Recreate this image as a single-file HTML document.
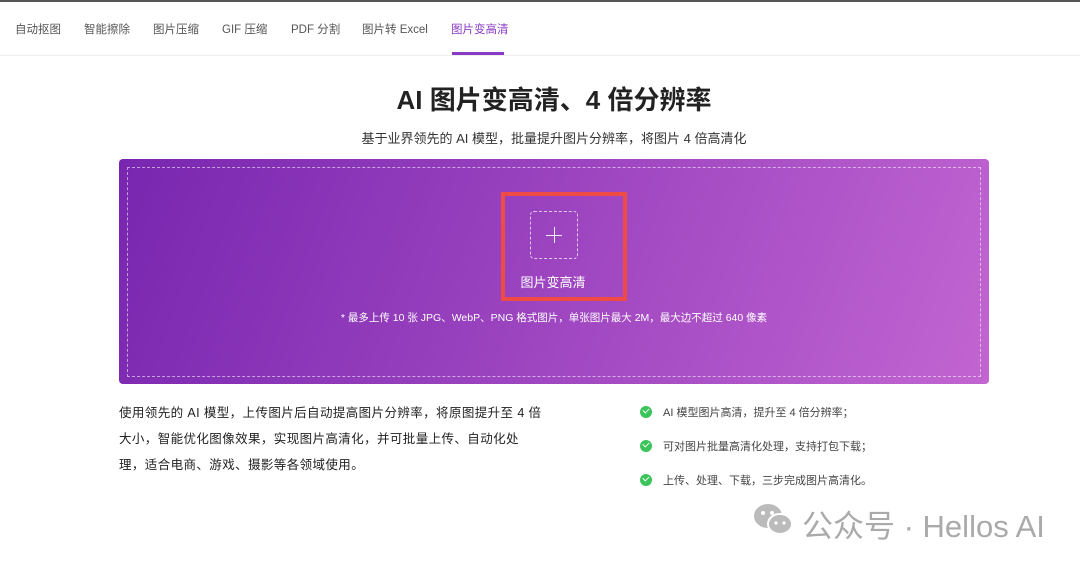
<!DOCTYPE html><html><head><meta charset="utf-8"><style>
body{margin:0;width:1080px;height:563px;background:#fff;font-family:"Liberation Sans","Noto Sans CJK SC",sans-serif;position:relative;overflow:hidden}
.top{position:absolute;left:0;top:0;width:1080px;height:2px;background:#555}
.nav{position:absolute;left:0;top:2px;width:1080px;height:53px;border-bottom:1px solid #eee}
.nav span{position:absolute;top:19px;font-size:11.5px;color:#555}
.nav .a{color:#8a3ac6}
.ul{position:absolute;left:452px;top:52px;width:52px;height:3px;background:#8a3ac6}
.abs{position:absolute}
.box{left:119px;top:159px;width:870px;height:225px;border-radius:4px;background:linear-gradient(110deg,#7826b0 0%,#9d45c0 50%,#c265d2 100%)}
.dash{left:127px;top:167px;width:852px;height:208px;border:1px dashed rgba(255,255,255,.55)}
.red{left:501px;top:192px;width:118px;height:101px;border:4px solid #f04a45}
.sq{left:530px;top:211px;width:46px;height:46px;border:1px dashed rgba(255,255,255,.7);border-radius:4px}
.li{left:640px;font-size:11px;color:#444}
.li i{display:inline-block;width:12px;height:12px;border-radius:50%;background:#3bc45a;vertical-align:-2px;margin-right:11px;position:relative}
.li i:after{content:"";position:absolute;left:3px;top:2px;width:5px;height:3px;border-left:1.5px solid #fff;border-bottom:1.5px solid #fff;transform:rotate(-45deg)}
</style></head><body>
<div class="top"></div>
<div class="nav">
<span style="left:15px">自动抠图</span><span style="left:84px">智能擦除</span><span style="left:153px">图片压缩</span><span style="left:222px">GIF 压缩</span><span style="left:291px">PDF 分割</span><span style="left:362px">图片转 Excel</span><span class="a" style="left:451px">图片变高清</span>
</div>
<div class="ul"></div>
<div class="abs" style="left:0;width:1108px;top:80px;text-align:center;font-size:26px;font-weight:bold;color:#222">AI 图片变高清、4 倍分辨率</div>
<div class="abs" style="left:0;width:1108px;top:128px;text-align:center;font-size:13px;color:#333">基于业界领先的 AI 模型，批量提升图片分辨率，将图片 4 倍高清化</div>
<div class="abs box"></div>
<div class="abs dash"></div>
<div class="abs red"></div>
<div class="abs sq"><div class="abs" style="left:15px;top:23px;width:16px;height:1px;background:#eee"></div><div class="abs" style="left:23px;top:15px;width:1px;height:16px;background:#eee"></div></div>
<div class="abs" style="left:490px;width:126px;top:272px;text-align:center;font-size:13px;color:#fff">图片变高清</div>
<div class="abs" style="left:119px;width:870px;top:310px;text-align:center;font-size:10.5px;color:#fff">* 最多上传 10 张 JPG、WebP、PNG 格式图片，单张图片最大 2M，最大边不超过 640 像素</div>
<div class="abs" style="left:119px;top:400px;width:480px;font-size:12.5px;letter-spacing:0.4px;line-height:26px;color:#222;white-space:nowrap">使用领先的 AI 模型，上传图片后自动提高图片分辨率，将原图提升至 4 倍<br>大小，智能优化图像效果，实现图片高清化，并可批量上传、自动化处<br>理，适合电商、游戏、摄影等各领域使用。</div>
<div class="abs li" style="top:404px"><i></i>AI 模型图片高清，提升至 4 倍分辨率；</div>
<div class="abs li" style="top:438px"><i></i>可对图片批量高清化处理，支持打包下载；</div>
<div class="abs li" style="top:472px"><i></i>上传、处理、下载，三步完成图片高清化。</div>
<svg class="abs" style="left:752px;top:502px" width="44" height="36" viewBox="0 0 44 36"><ellipse cx="16" cy="14" rx="14" ry="12" fill="#bbb"/><ellipse cx="28" cy="22" rx="12" ry="10" fill="#bbb" stroke="#fff" stroke-width="2"/><circle cx="11" cy="11" r="2" fill="#fff"/><circle cx="20" cy="11" r="2" fill="#fff"/><circle cx="24" cy="21" r="1.6" fill="#fff"/><circle cx="32" cy="21" r="1.6" fill="#fff"/></svg>
<div class="abs" style="left:802px;top:501px;font-size:31px;color:#aaa">公众号 · Hellos AI</div>
</body></html>
